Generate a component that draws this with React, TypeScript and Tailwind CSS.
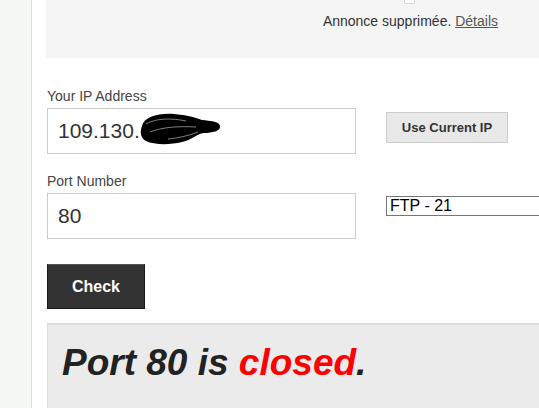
import React from 'react';

const Scribble = () => (
  <svg
    className="absolute left-[90px] top-[3px]"
    width="84"
    height="34"
    viewBox="0 0 84 34"
  >
    <path
      d="M4 14 C6 5 20 1 36 2 C48 3 56 5 64 8 C72 9 81 9 82 14 C83 19 74 21 66 21 C58 22 54 28 44 30 C32 33 16 33 8 29 C2 26 2 19 4 14 Z"
      fill="#000"
    />
    <path
      d="M8 12 C18 6 34 6 48 9 M12 20 C24 15 42 14 58 15 M30 27 C40 26 50 24 60 20"
      stroke="#fff"
      strokeWidth="0.9"
      fill="none"
      opacity="0.55"
    />
  </svg>
);

export default function App() {
  return (
    <div className="flex min-h-[408px] bg-white font-['Liberation_Sans',Arial,sans-serif]">
      <div className="w-[32px] shrink-0 border-r border-[#dcdcdc] bg-[#f4f9f4]" />

      <div className="flex-1 pl-[14px]">
        {/* ad placeholder */}
        <div className="relative flex h-[58px] items-start justify-end bg-[#f5f5f5] pr-[41px]">
          <div className="absolute left-[358px] top-0 h-[4px] w-[11px] rounded-b-[2px] border border-t-0 border-[#d4d4d4] bg-white" />
          <p className="mt-[13px] text-[14px] leading-[16px] text-[#333]">
            Annonce supprimée. <span className="text-[#555] underline">Détails</span>
          </p>
        </div>

        <div className="pl-px">
          {/* IP row */}
          <div className="mt-[30px] flex items-start">
            <div className="w-[309px]">
              <label className="block text-[14px] leading-[16px] text-[#444]">Your IP Address</label>
              <div className="relative mt-[4px] flex h-[46px] items-center border border-[#ccc] px-[10px] text-[21px] text-[#333]">
                109.130.
                <Scribble />
              </div>
            </div>
            <button className="ml-[30px] mt-[24px] h-[31px] w-[122px] border border-[#ccc] bg-[#e8e8e8] text-[13px] font-bold text-[#333]">
              Use Current IP
            </button>
          </div>

          {/* Port row */}
          <div className="mt-[19px] flex items-start">
            <div className="w-[309px]">
              <label className="block text-[14px] leading-[16px] text-[#444]">Port Number</label>
              <div className="mt-[4px] flex h-[46px] items-center border border-[#ccc] px-[10px] text-[21px] text-[#333]">
                80
              </div>
            </div>
            <div className="ml-[30px] mt-[23px] flex h-[20px] flex-1 items-center border border-r-0 border-[#767676] pl-[3px] text-[16px] text-black">
              FTP - 21
            </div>
          </div>

          <button className="mt-[25px] h-[45px] w-[98px] border border-[#1a1a1a] border-t-[#555] bg-[#333] text-[16px] font-bold text-white">
            Check
          </button>

          <div className="mt-[14px] h-[90px] border-l border-t-2 border-[#dcdcdc] bg-[#ebebeb] pl-[14px] pt-[18px]">
            <p className="text-[37px] font-bold italic leading-[40px] text-[#222]">
              Port 80 is <span className="text-[#ff0000]">closed</span>.
            </p>
          </div>
        </div>
      </div>
    </div>
  );
}
